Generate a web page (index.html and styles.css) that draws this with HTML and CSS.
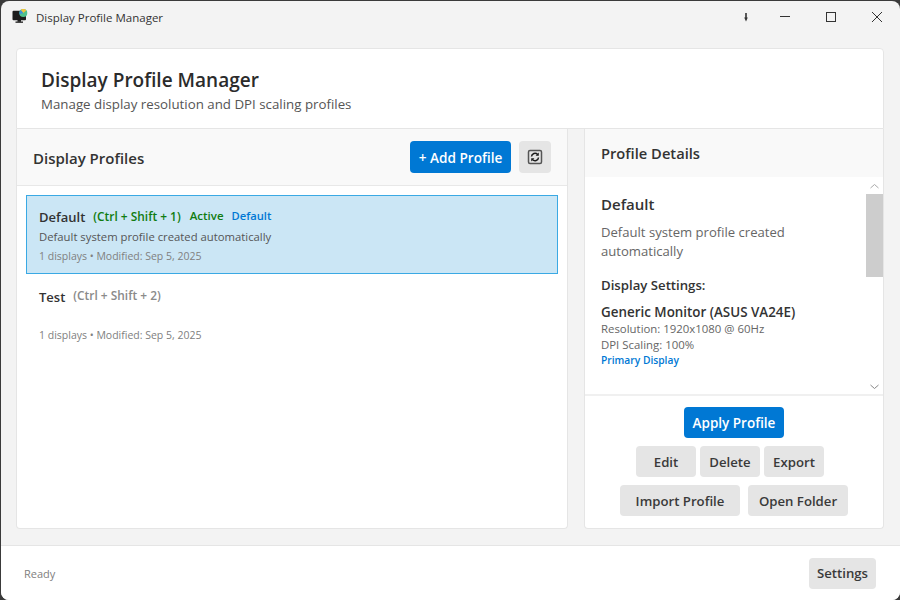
FILE: index.html
```html
<!DOCTYPE html>
<html lang="en">
<head>
  <meta charset="UTF-8">
  <title>Display Profile Manager</title>
  <link rel="stylesheet" href="styles.css">
</head>
<body>
  <div class="window">
    <div class="titlebar">
      <svg class="app-icon" width="16" height="15" viewBox="0 0 16 15">
        <rect x="0.500" y="1.700" width="13.500" height="9.500" rx="1" fill="#1c1c1c"/>
        <rect x="5.500" y="11" width="3.500" height="1.800" fill="#1c1c1c"/>
        <rect x="3.500" y="12.500" width="7.500" height="1.300" fill="#1c1c1c"/>
        <circle cx="11.300" cy="4" r="4" fill="#4fc08d"/>
        <path d="M8.800 .9A4 4 0 0 1 14.300 1.400L11.300 4Z" fill="#f0c23c"/>
        <path d="M8.800 .9A4 4 0 0 0 7.500 5.200L11.300 4Z" fill="#3f8fd8"/>
      </svg>
      <span class="title-text">Display Profile Manager</span>
      <div class="caption-btns">
        <svg width="39" height="32" viewBox="0 0 39 32"><path d="M23 12v5" stroke="#333" stroke-width="1.600"/><path d="M21.200 16.500h3.600L23 20.500z" fill="#333"/></svg>
        <svg width="46" height="32" viewBox="0 0 46 32"><path d="M18 15.500h10" stroke="#333" stroke-width="1"/></svg>
        <svg width="46" height="32" viewBox="0 0 46 32"><rect x="18.500" y="11.500" width="9" height="9" fill="none" stroke="#333" stroke-width="1"/></svg>
        <svg width="46" height="32" viewBox="0 0 46 32"><path d="M18 11l10 10M28 11L18 21" stroke="#333" stroke-width="1"/></svg>
      </div>
    </div>

    <div class="content">
      <header class="app-header">
        <h1>Display Profile Manager</h1>
        <p>Manage display resolution and DPI scaling profiles</p>
      </header>

      <div class="main">
        <section class="profiles">
          <div class="profiles-head">
            <h2>Display Profiles</h2>
            <button class="btn primary add-btn">+ Add Profile</button>
            <button class="btn refresh-btn" aria-label="Refresh">
              <svg width="16" height="16" viewBox="0 0 16 16">
                <rect x="1.500" y="1.500" width="13" height="13" rx="1.500" fill="none" stroke="#555" stroke-width="1.500"/>
                <path d="M4.500 7.500A3.500 3.500 0 0 1 10.600 5.400" fill="none" stroke="#1c1c1c" stroke-width="1.500"/>
                <path d="M11.500 8.500A3.500 3.500 0 0 1 5.400 10.600" fill="none" stroke="#1c1c1c" stroke-width="1.500"/>
                <path d="M11.800 3.600v3.200h-3.200zM4.200 12.400V9.200h3.200z" fill="#1c1c1c"/>
              </svg>
            </button>
          </div>
          <div class="profile-list">
            <div class="profile-item selected">
              <div class="profile-top">
                <span class="profile-name">Default</span>
                <span class="tag keys green">(Ctrl + Shift + 1)</span>
                <span class="tag green">Active</span>
                <span class="tag blue">Default</span>
              </div>
              <div class="profile-desc">Default system profile created automatically</div>
              <div class="profile-meta">1 displays • Modified: Sep 5, 2025</div>
            </div>
            <div class="profile-item">
              <div class="profile-top">
                <span class="profile-name lower">Test</span>
                <span class="tag keys grey">(Ctrl + Shift + 2)</span>
              </div>
              <div class="profile-desc"></div>
              <div class="profile-meta">1 displays • Modified: Sep 5, 2025</div>
            </div>
          </div>
        </section>

        <section class="details">
          <div class="details-head"><h2>Profile Details</h2></div>
          <div class="details-scroll">
            <div class="details-body">
              <h3>Default</h3>
              <p class="details-desc">Default system profile created automatically</p>
              <h4>Display Settings:</h4>
              <div class="monitor-name">Generic Monitor (ASUS VA24E)</div>
              <div class="monitor-line">Resolution: 1920x1080 @ 60Hz</div>
              <div class="monitor-line">DPI Scaling: 100%</div>
              <div class="monitor-primary">Primary Display</div>
            </div>
            <div class="scrollbar">
              <svg width="17" height="17" viewBox="0 0 17 17"><path d="M4.500 11L8.500 7.500l4 3.500" fill="none" stroke="#aaa" stroke-width="1"/></svg>
              <div class="thumb"></div>
              <div class="track"></div>
              <svg width="17" height="17" viewBox="0 0 17 17"><path d="M4.500 8l4 3.500 4-3.500" fill="none" stroke="#888" stroke-width="1"/></svg>
            </div>
          </div>
          <div class="details-actions">
            <button class="btn primary apply-btn">Apply Profile</button>
            <div class="action-row small">
              <button class="btn w60">Edit</button>
              <button class="btn w60">Delete</button>
              <button class="btn w60">Export</button>
            </div>
            <div class="action-row wide">
              <button class="btn import-btn">Import Profile</button>
              <button class="btn folder-btn">Open Folder</button>
            </div>
          </div>
        </section>
      </div>
    </div>

    <footer class="statusbar">
      <span class="status-text">Ready</span>
      <button class="btn settings-btn">Settings</button>
    </footer>
  </div>
</body>
</html>
```

FILE: styles.css
```css
html, body {
  margin: 0;
  height: 100%;
}
body {
  background: #3a3a3a;
  font-family: "Open Sans", "Noto Sans", sans-serif;
  color: #2b2b2b;
  overflow: hidden;
}
h1, h2, h3, h4, p {
  margin: 0;
}
.window {
  box-sizing: border-box;
  width: 899px;
  height: 599px;
  margin: 1px 0 0 1px;
  background: #f3f3f3;
  border-radius: 8px;
  display: flex;
  flex-direction: column;
  overflow: hidden;
}
.titlebar {
  height: 32px;
  display: flex;
  align-items: center;
  flex: none;
}
.app-icon {
  margin-left: 11px;
  margin-top: -1px;
}
.title-text {
  margin-left: 8px;
  font-size: 11.500px;
  color: #333;
}
.caption-btns {
  margin-left: auto;
  display: flex;
  margin-top: -1px;
}
.caption-btns svg {
  display: block;
}
.content {
  flex: 1;
  padding: 15px 16px 16px 15px;
  display: flex;
  flex-direction: column;
  min-height: 0;
}
.app-header {
  height: 81px;
  box-sizing: border-box;
  background: #fff;
  border: 1px solid #e5e5e5;
  border-radius: 4px 4px 0 0;
  padding: 18px 24px 0;
  flex: none;
}
.app-header h1 {
  font-size: 19px;
  font-weight: 600;
  line-height: 26px;
  color: #2b2b2b;
}
.app-header p {
  font-size: 13.300px;
  line-height: 20px;
  margin-top: 1px;
  color: #555;
}
.main {
  flex: 1;
  display: flex;
  gap: 16px;
  min-height: 0;
}
.profiles {
  width: 552px;
  box-sizing: border-box;
  background: #fff;
  border: 1px solid #e5e5e5;
  border-top: 0;
  border-radius: 0 0 4px 4px;
  display: flex;
  flex-direction: column;
}
.profiles-head {
  height: 57px;
  box-sizing: border-box;
  background: #f9f9f9;
  border-bottom: 1px solid #e8e8e8;
  display: flex;
  align-items: center;
  padding: 0 16px;
  gap: 8px;
  flex: none;
}
.profiles-head h2 {
  font-size: 15px;
  font-weight: 600;
  margin-right: auto;
  margin-top: 2px;
  color: #333;
}
.btn {
  border: 0;
  border-radius: 4px;
  background: #e5e5e5;
  color: #3a3a3a;
  font-family: inherit;
  font-size: 13.200px;
  font-weight: 600;
  padding: 0;
  height: 31px;
}
.primary {
  background: #0078d4;
  color: #fff;
  font-size: 13.500px;
}
.add-btn {
  width: 101px;
  height: 32px;
  font-size: 13.600px;
}
.refresh-btn {
  width: 32px;
  height: 32px;
  display: flex;
  align-items: center;
  justify-content: center;
}
.profile-list {
  padding: 9px 9px 0;
}
.profile-item {
  box-sizing: border-box;
  height: 79px;
  padding: 11px 12px 0;
  border: 1px solid transparent;
}
.profile-item.selected {
  background: #cbe6f5;
  border-color: #3aa9e4;
}
.profile-top {
  display: flex;
  align-items: flex-start;
  height: 20px;
  gap: 9px;
}
.profile-name {
  font-size: 13px;
  font-weight: 600;
  line-height: 21px;
  color: #333;
  margin-right: -1px;
}
.profile-name.lower {
  padding-top: 1px;
}
.tag {
  font-size: 11.500px;
  font-weight: 600;
  line-height: 18px;
}
.tag.keys {
  font-size: 11.900px;
}
.green { color: #107c10; }
.blue {
  color: #0078d4;
  font-size: 11.200px;
  margin-left: -1px;
}
.grey { color: #8a8a8a; }
.profile-desc {
  font-size: 11.300px;
  line-height: 20px;
  height: 20px;
  color: #555;
}
.profile-meta {
  font-size: 10.500px;
  line-height: 18px;
  color: #808080;
}
.details {
  flex: 1;
  background: #fff;
  border: 1px solid #e5e5e5;
  border-top: 0;
  border-radius: 0 0 4px 4px;
  display: flex;
  flex-direction: column;
  min-width: 0;
}
.details-head {
  height: 48px;
  box-sizing: border-box;
  background: #f9f9f9;
  padding: 0 16px;
  display: flex;
  align-items: center;
  flex: none;
}
.details-head h2 {
  font-size: 14.700px;
  font-weight: 600;
  color: #333;
}
.details-scroll {
  height: 219px;
  box-sizing: border-box;
  border-bottom: 2px solid #f0f0f0;
  display: flex;
  flex: none;
}
.details-body {
  flex: 1;
  padding: 16px 16px 0;
}
.details-body h3 {
  font-size: 15px;
  font-weight: 600;
  line-height: 22px;
  color: #333;
}
.details-desc {
  font-size: 13.100px;
  line-height: 19px;
  margin-top: 8px;
  color: #666;
}
.details-body h4 {
  font-size: 13.200px;
  font-weight: 600;
  line-height: 18px;
  margin-top: 15px;
  color: #333;
}
.monitor-name {
  font-size: 13.400px;
  font-weight: 600;
  line-height: 17px;
  margin-top: 10px;
  color: #333;
}
.monitor-line {
  font-size: 11.400px;
  line-height: 16px;
  color: #666;
}
.monitor-primary {
  font-size: 10.250px;
  font-weight: 600;
  line-height: 15px;
  color: #0078d4;
}
.scrollbar {
  width: 17px;
  display: flex;
  flex-direction: column;
  flex: none;
}
.scrollbar svg {
  flex: none;
  display: block;
}
.thumb {
  height: 83px;
  background: #cdcdcd;
  flex: none;
}
.track {
  flex: 1;
}
.details-actions {
  flex: 1;
  display: flex;
  flex-direction: column;
  align-items: center;
  padding-top: 11px;
}
.apply-btn {
  width: 100px;
}
.action-row {
  display: flex;
  justify-content: center;
}
.action-row.small {
  gap: 4px;
  margin-top: 8px;
  margin-right: 8px;
}
.action-row.wide {
  gap: 8px;
  margin-top: 8px;
}
.w60 {
  width: 60px;
}
.import-btn {
  width: 120px;
}
.folder-btn {
  width: 100px;
}
.statusbar {
  height: 55px;
  box-sizing: border-box;
  background: #fff;
  border-top: 1px solid #e5e5e5;
  display: flex;
  align-items: center;
  justify-content: space-between;
  padding: 0 24px 0 23px;
  flex: none;
}
.status-text {
  font-size: 11px;
  color: #808080;
}
.settings-btn {
  width: 67px;
}
```
